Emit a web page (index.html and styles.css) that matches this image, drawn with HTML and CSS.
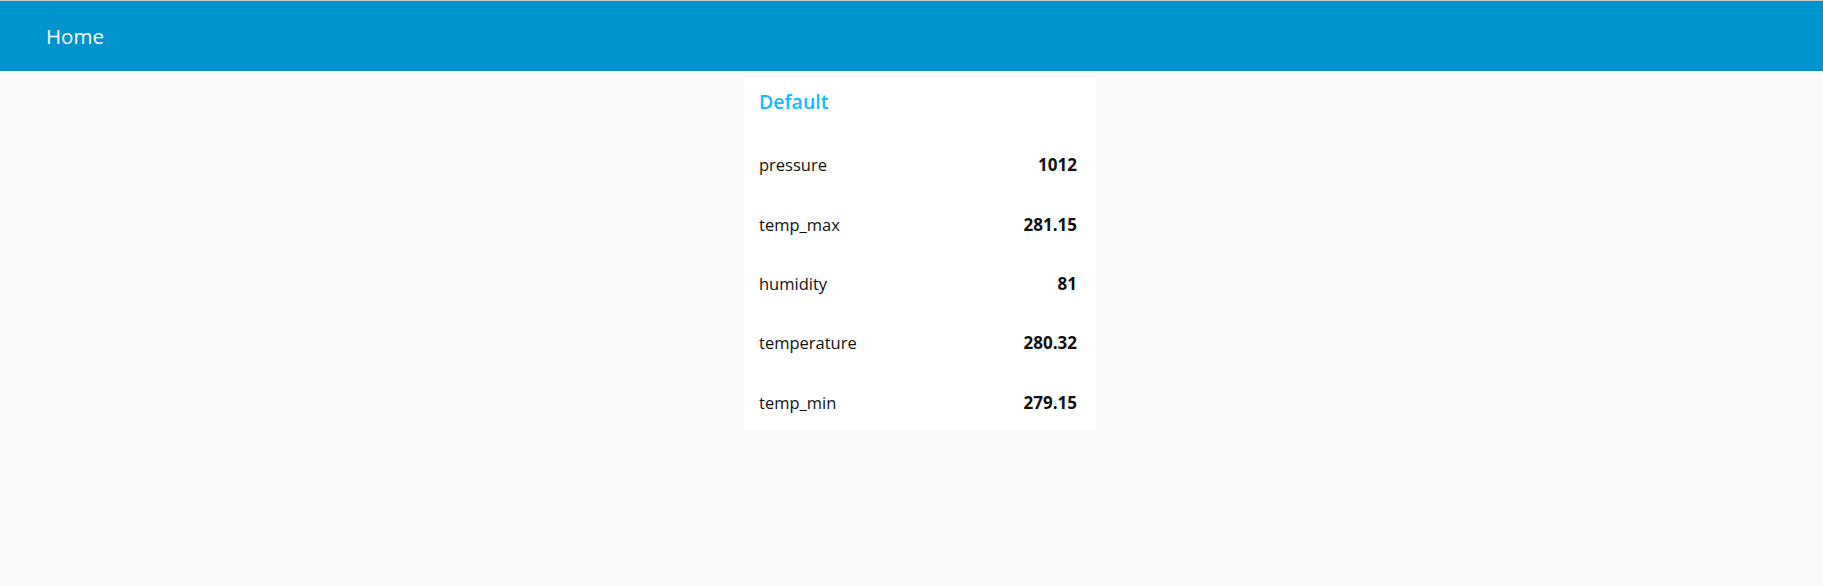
FILE: index.html
```html
<!DOCTYPE html>
<html>
<head>
<meta charset="utf-8">
<link rel="stylesheet" href="styles.css">
</head>
<body>
<header class="toolbar">
  <span class="toolbar-title">Home</span>
</header>
<main class="content">
  <section class="card">
    <h2 class="card-title">Default</h2>
    <div class="row"><span class="label">pressure</span><span class="value">1012</span></div>
    <div class="row"><span class="label">temp_max</span><span class="value">281.15</span></div>
    <div class="row"><span class="label">humidity</span><span class="value">81</span></div>
    <div class="row"><span class="label">temperature</span><span class="value">280.32</span></div>
    <div class="row"><span class="label">temp_min</span><span class="value">279.15</span></div>
  </section>
</main>
</body>
</html>
```

FILE: styles.css
```css
html, body {
  margin: 0;
  padding: 0;
  background: #fafafa;
  font-family: "Open Sans", "Noto Sans", sans-serif;
  color: #111;
}

.toolbar {
  height: 70px;
  border-top: 1px solid #c8c8c8;
  background: #0094ce;
  display: flex;
  align-items: center;
  padding-left: 46px;
}

.toolbar-title {
  color: #fff;
  font-size: 20.5px;
  line-height: 1;
  padding-top: 1px;
}

.content {
  display: flex;
  justify-content: center;
  padding-top: 6px;
}

.card {
  width: 352px;
  height: 352px;
  margin-left: 17px;
  background: #fff;
  box-sizing: border-box;
  padding: 0 19px 0 15px;
  display: flex;
  flex-direction: column;
}

.card-title {
  margin: 0;
  height: 55.3px;
  box-sizing: border-box;
  padding-top: 14px;
  font-size: 19.5px;
  font-weight: 600;
  line-height: 22px;
  color: #12bcff;
}

.row {
  height: 59.33px;
  box-sizing: border-box;
  padding-top: 6px;
  display: flex;
  justify-content: space-between;
  align-items: center;
  font-size: 16.5px;
}

.label {
  font-weight: 400;
}

.value {
  font-weight: 700;
  font-size: 17px;
}
```
